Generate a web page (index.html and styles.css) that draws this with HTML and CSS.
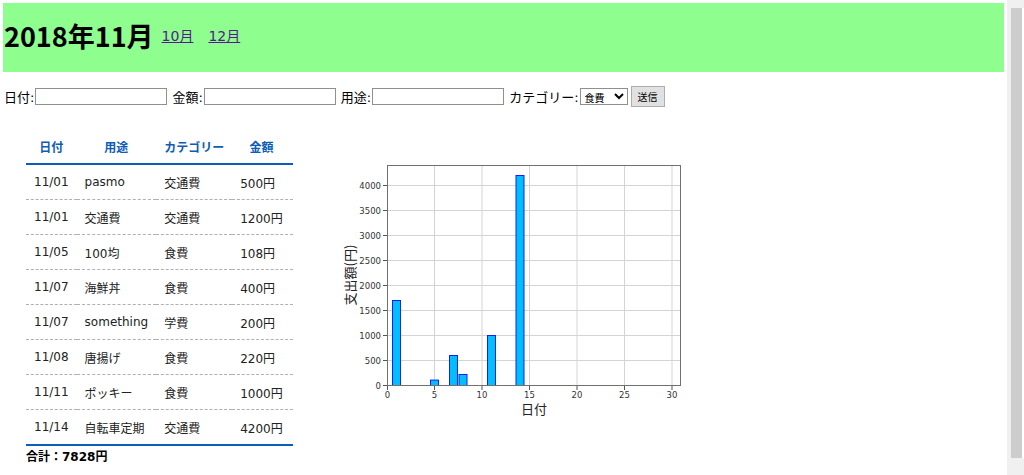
FILE: index.html
```html
<!DOCTYPE html>
<html lang="ja">
<head>
    <meta charset="UTF-8">
    <title>家計簿 2018年11月</title>
    <link rel="stylesheet" href="styles.css">
</head>
<body>
    <header class="month-header">
        <h1>2018年11月</h1>
        <a href="#" class="month-link">10月</a>
        <a href="#" class="month-link">12月</a>
    </header>

    <form class="entry-form">
        日付:<input type="text" class="entry-input">
        金額:<input type="text" class="entry-input">
        用途:<input type="text" class="entry-input">
        カテゴリー:<select class="entry-select">
            <option>食費</option>
            <option>交通費</option>
            <option>学費</option>
        </select>
        <button type="button" class="entry-submit">送信</button>
    </form>

    <div class="content">
        <div class="list">
            <table class="expense-table">
                <thead>
                    <tr><th>日付</th><th>用途</th><th>カテゴリー</th><th>金額</th></tr>
                </thead>
                <tbody>
                    <tr><td>11/01</td><td>pasmo</td><td>交通費</td><td>500円</td></tr>
                    <tr><td>11/01</td><td>交通費</td><td>交通費</td><td>1200円</td></tr>
                    <tr><td>11/05</td><td>100均</td><td>食費</td><td>108円</td></tr>
                    <tr><td>11/07</td><td>海鮮丼</td><td>食費</td><td>400円</td></tr>
                    <tr><td>11/07</td><td>something</td><td>学費</td><td>200円</td></tr>
                    <tr><td>11/08</td><td>唐揚げ</td><td>食費</td><td>220円</td></tr>
                    <tr><td>11/11</td><td>ポッキー</td><td>食費</td><td>1000円</td></tr>
                    <tr><td>11/14</td><td>自転車定期</td><td>交通費</td><td>4200円</td></tr>
                </tbody>
            </table>
            <p class="total">合計：7828円</p>
        </div>

        <svg class="chart" width="350" height="272" viewBox="0 0 350 272">
            <!-- grid -->
            <g stroke="#d4d4d4" stroke-width="1">
                <line x1="94.5" y1="15" x2="94.5" y2="235"/>
                <line x1="142" y1="15" x2="142" y2="235"/>
                <line x1="189.5" y1="15" x2="189.5" y2="235"/>
                <line x1="237" y1="15" x2="237" y2="235"/>
                <line x1="284.5" y1="15" x2="284.5" y2="235"/>
                <line x1="332" y1="15" x2="332" y2="235"/>
                <line x1="47" y1="210.5" x2="341" y2="210.5"/>
                <line x1="47" y1="185.5" x2="341" y2="185.5"/>
                <line x1="47" y1="160.5" x2="341" y2="160.5"/>
                <line x1="47" y1="135.5" x2="341" y2="135.5"/>
                <line x1="47" y1="110.5" x2="341" y2="110.5"/>
                <line x1="47" y1="85.5" x2="341" y2="85.5"/>
                <line x1="47" y1="60.5" x2="341" y2="60.5"/>
                <line x1="47" y1="35.5" x2="341" y2="35.5"/>
            </g>
            <!-- bars -->
            <g fill="#00bfff" stroke="#1a1aff" stroke-width="1">
                <rect x="52.5" y="150.5" width="8" height="85"/>
                <rect x="90.5" y="230.1" width="8" height="5.4"/>
                <rect x="109.5" y="205.5" width="8" height="30"/>
                <rect x="119" y="224.5" width="8" height="11"/>
                <rect x="147.5" y="185.5" width="8" height="50"/>
                <rect x="176" y="25.5" width="8" height="210"/>
            </g>
            <!-- frame and ticks -->
            <rect x="47.5" y="15.5" width="293" height="220" fill="none" stroke="#707070"/>
            <g stroke="#555">
                <line x1="43" y1="235.5" x2="47" y2="235.5"/>
                <line x1="43" y1="210.5" x2="47" y2="210.5"/>
                <line x1="43" y1="185.5" x2="47" y2="185.5"/>
                <line x1="43" y1="160.5" x2="47" y2="160.5"/>
                <line x1="43" y1="135.5" x2="47" y2="135.5"/>
                <line x1="43" y1="110.5" x2="47" y2="110.5"/>
                <line x1="43" y1="85.5" x2="47" y2="85.5"/>
                <line x1="43" y1="60.5" x2="47" y2="60.5"/>
                <line x1="43" y1="35.5" x2="47" y2="35.5"/>
                <line x1="47.5" y1="236" x2="47.5" y2="240"/>
                <line x1="94.5" y1="236" x2="94.5" y2="240"/>
                <line x1="142" y1="236" x2="142" y2="240"/>
                <line x1="189.5" y1="236" x2="189.5" y2="240"/>
                <line x1="237" y1="236" x2="237" y2="240"/>
                <line x1="284.5" y1="236" x2="284.5" y2="240"/>
                <line x1="332" y1="236" x2="332" y2="240"/>
            </g>
            <g class="tick-label" text-anchor="end">
                <text x="41" y="238.5">0</text>
                <text x="41" y="213.5">500</text>
                <text x="41" y="188.5">1000</text>
                <text x="41" y="163.5">1500</text>
                <text x="41" y="138.5">2000</text>
                <text x="41" y="113.5">2500</text>
                <text x="41" y="88.5">3000</text>
                <text x="41" y="63.5">3500</text>
                <text x="41" y="38.5">4000</text>
            </g>
            <g class="tick-label" text-anchor="middle">
                <text x="47.5" y="248">0</text>
                <text x="94.5" y="248">5</text>
                <text x="142" y="248">10</text>
                <text x="189.5" y="248">15</text>
                <text x="237" y="248">20</text>
                <text x="284.5" y="248">25</text>
                <text x="332" y="248">30</text>
            </g>
            <text class="axis-label" x="194" y="264" text-anchor="middle">日付</text>
            <text class="axis-label" x="0" y="0" text-anchor="middle" transform="translate(15 125) rotate(-90)">支出額(円)</text>
        </svg>
    </div>

    <div class="scrollbar"><div class="scrollbar-thumb"></div></div>
</body>
</html>
```

FILE: styles.css
```css
body {
    font-family: "DejaVu Sans", "Noto Sans CJK JP", sans-serif;
    font-size: 13px;
    margin: 3px 20px 3px 3px;
    color: #000;
}
.month-header {
    background-color: #8efe8e;
    height: 69px;
    display: flex;
    align-items: center;
    padding-left: 1px;
}
.month-header h1 {
    font-family: "Noto Sans CJK JP", sans-serif;
    font-size: 27px;
    font-weight: bold;
    margin: 0 8px 0 0;
    position: relative;
    top: -2px;
}
.month-link {
    font-family: "DejaVu Sans", "Noto Sans CJK JP", sans-serif;
    font-size: 14px;
    color: #551a8b;
    margin: 0 15px 0 0;
    position: relative;
    top: -3px;
}
.entry-form {
    margin: 13px 0 0 1px;
    display: flex;
    align-items: center;
    white-space: nowrap;
    height: 22px;
}
.entry-input {
    width: 132px;
    height: 17px;
    box-sizing: border-box;
    border: 1px solid #8f8f8f;
    margin: 0 5px 0 1px;
    padding: 0 2px;
}
.entry-select {
    width: 48px;
    height: 17px;
    box-sizing: border-box;
    font-size: 10px;
    font-family: "Noto Sans CJK JP", sans-serif;
    border: 1px solid #8f8f8f;
    border-radius: 0;
    background: #fff;
    margin: 0 3px 0 1px;
    padding: 0;
}
.entry-submit {
    width: 34px;
    height: 21px;
    font-size: 10px;
    font-family: "Noto Sans CJK JP", sans-serif;
    background: #e1e1e1;
    border: 1px solid #adadad;
    border-radius: 0;
    padding: 0;
}
.content {
    display: flex;
    align-items: flex-start;
    margin-top: 22px;
}
.list {
    margin-left: 23px;
}
.expense-table {
    border-collapse: collapse;
    font-size: 12px;
    border-bottom: 2px solid #0d5cb6;
}
.expense-table th {
    color: #0d5cb6;
    font-weight: bold;
    height: 34px;
    padding: 0 8px;
    text-align: center;
    border-bottom: 2px solid #0d5cb6;
}
.expense-table td {
    height: 34px;
    padding: 0 8px;
    text-align: left;
    color: #222;
    border-bottom: 1px dashed #b0b0b0;
}
.expense-table th:last-child,
.expense-table td:last-child {
    padding-right: 10px;
}
.expense-table tbody tr:last-child td {
    border-bottom: none;
}
.total {
    font-size: 12px;
    font-weight: bold;
    margin: 1px 0 0 0;
}
.chart {
    margin: 21px 0 0 47px;
    overflow: visible;
}
.tick-label {
    font-family: "DejaVu Sans", sans-serif;
    font-size: 8.5px;
    fill: #333;
}
.axis-label {
    font-family: "Noto Sans CJK JP", sans-serif;
    font-size: 13px;
    fill: #222;
}
.scrollbar {
    position: fixed;
    top: 0;
    right: 0;
    bottom: 0;
    width: 17px;
    background: #f0f0f0;
}
.scrollbar-thumb {
    margin: 8px 0 0 4px;
    height: 450px;
    background: #cdcdcd;
    border-right: 2px solid #fff;
}
```
